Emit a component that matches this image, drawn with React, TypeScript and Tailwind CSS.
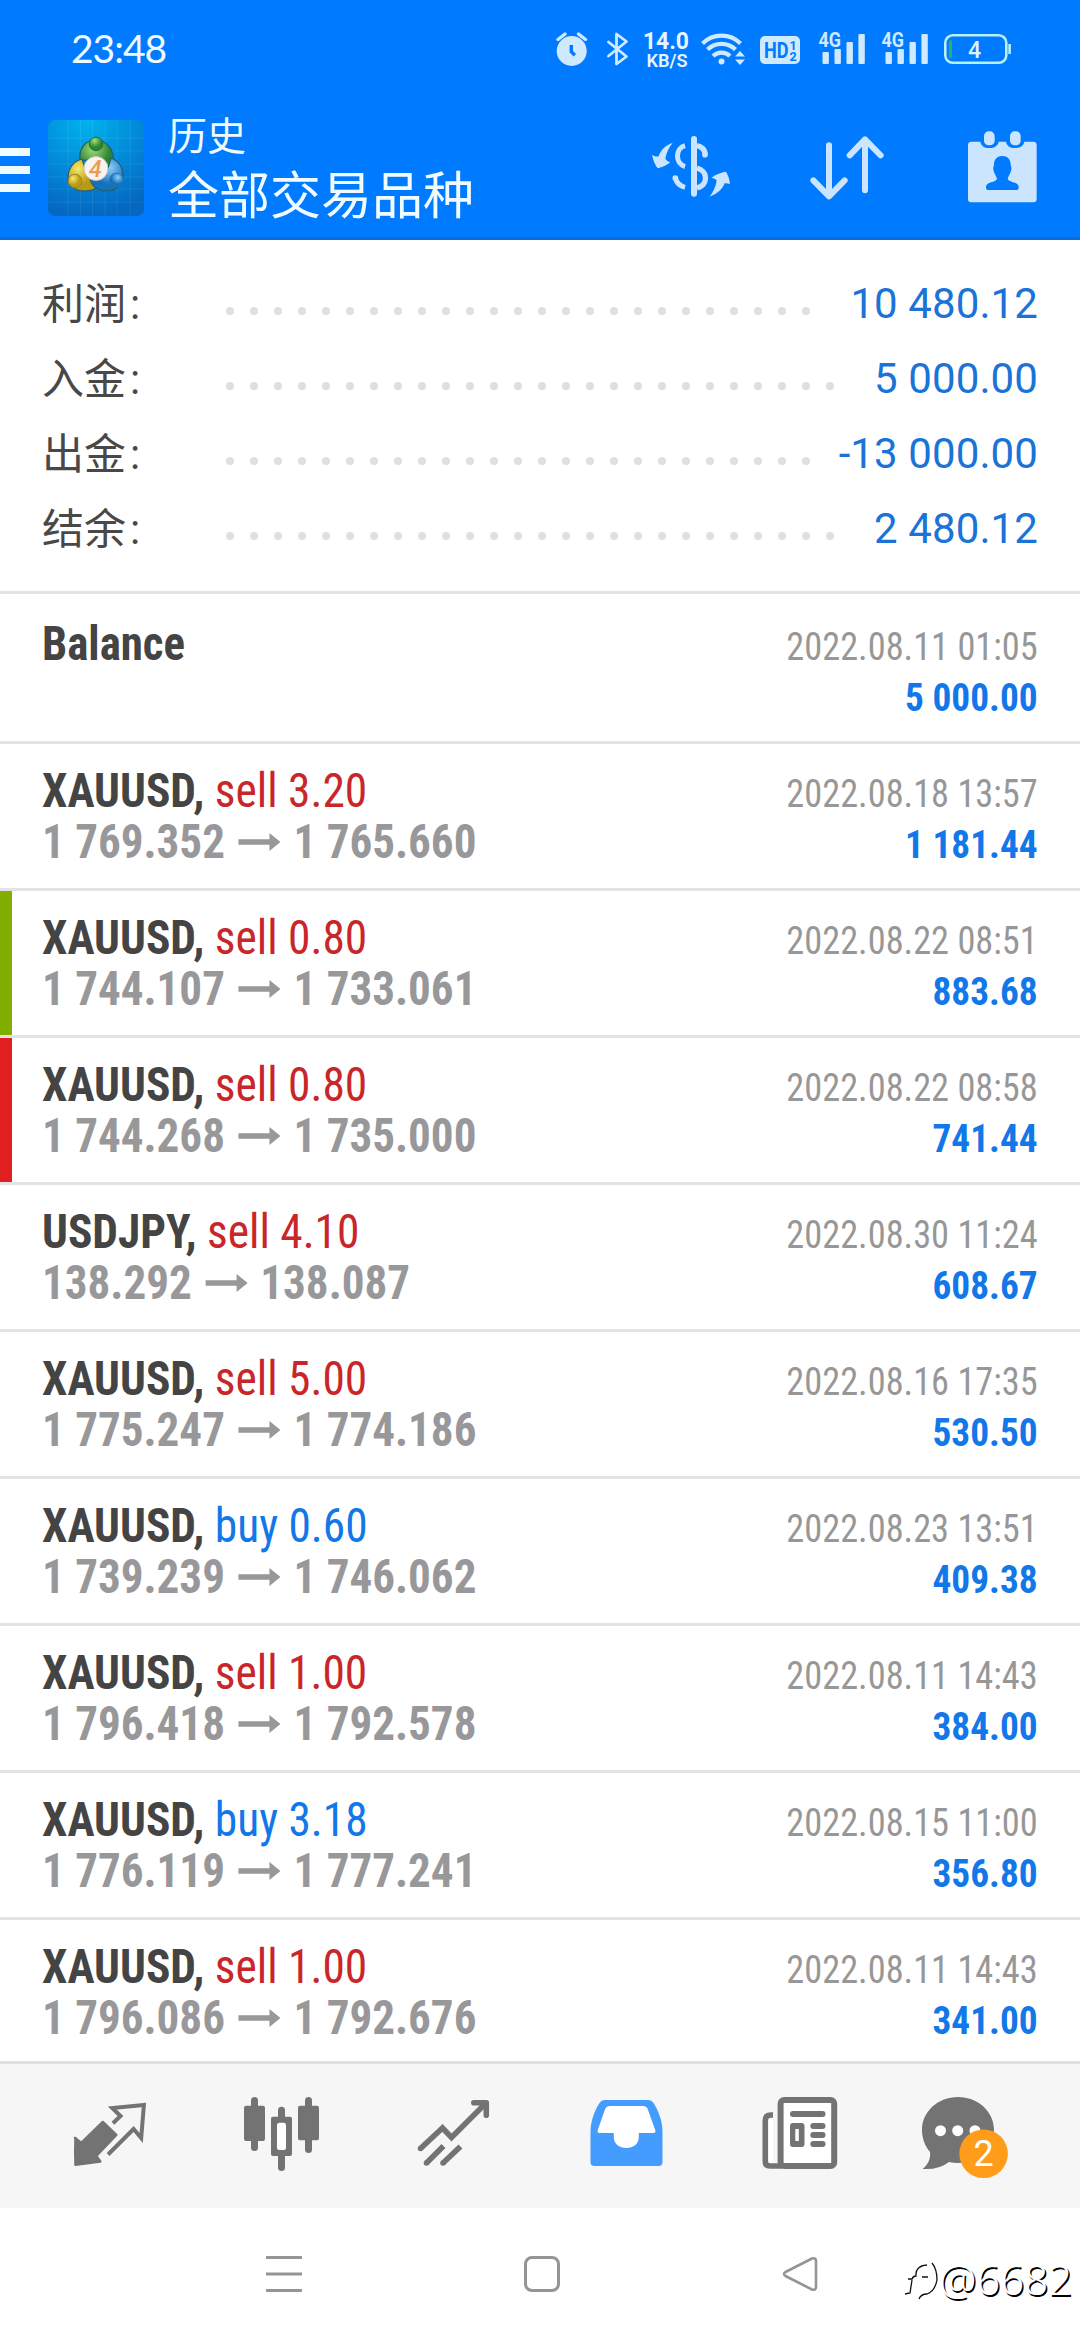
import type { ReactNode } from "react";

const summary = [
  { label: "利润", value: "10 480.12", dots: 25 },
  { label: "入金", value: "5 000.00", dots: 26 },
  { label: "出金", value: "-13 000.00", dots: 25 },
  { label: "结余", value: "2 480.12", dots: 26 },
];

type Deal = {
  symbol: string;
  side: "sell" | "buy";
  volume: string;
  open: string;
  close: string;
  time: string;
  profit: string;
  mark?: "tp" | "sl";
};

const deals: Deal[] = [
  { symbol: "XAUUSD", side: "sell", volume: "3.20", open: "1 769.352", close: "1 765.660", time: "2022.08.18 13:57", profit: "1 181.44" },
  { symbol: "XAUUSD", side: "sell", volume: "0.80", open: "1 744.107", close: "1 733.061", time: "2022.08.22 08:51", profit: "883.68", mark: "tp" },
  { symbol: "XAUUSD", side: "sell", volume: "0.80", open: "1 744.268", close: "1 735.000", time: "2022.08.22 08:58", profit: "741.44", mark: "sl" },
  { symbol: "USDJPY", side: "sell", volume: "4.10", open: "138.292", close: "138.087", time: "2022.08.30 11:24", profit: "608.67" },
  { symbol: "XAUUSD", side: "sell", volume: "5.00", open: "1 775.247", close: "1 774.186", time: "2022.08.16 17:35", profit: "530.50" },
  { symbol: "XAUUSD", side: "buy", volume: "0.60", open: "1 739.239", close: "1 746.062", time: "2022.08.23 13:51", profit: "409.38" },
  { symbol: "XAUUSD", side: "sell", volume: "1.00", open: "1 796.418", close: "1 792.578", time: "2022.08.11 14:43", profit: "384.00" },
  { symbol: "XAUUSD", side: "buy", volume: "3.18", open: "1 776.119", close: "1 777.241", time: "2022.08.15 11:00", profit: "356.80" },
  { symbol: "XAUUSD", side: "sell", volume: "1.00", open: "1 796.086", close: "1 792.676", time: "2022.08.11 14:43", profit: "341.00" },
];

function Signal() {
  return (
    <svg className="w-[48px] h-[40px]" viewBox="818 28 48 40" fill="#cfe9ff">
      <text x="818.5" y="46" fontSize="21" fontWeight="700" textLength="22.5" lengthAdjust="spacingAndGlyphs">
        4G
      </text>
      <rect x="822.5" y="51" width="6.4" height="12" rx="1" />
      <rect x="834.5" y="48" width="6.4" height="15" rx="1" />
      <rect x="846.5" y="41" width="6.4" height="22" rx="1" />
      <rect x="858.4" y="33" width="6.4" height="30" rx="1" />
    </svg>
  );
}

function StatusBar() {
  return (
    <div className="flex h-[97px] items-center pl-[71px] pr-[68px]">
      <span className="flex-1 font-['Lato'] text-[39px] leading-none tracking-[-1px] text-[#f0fbff]">23:48</span>
      <div className="flex items-center font-['Roboto']">
        {/* alarm */}
        <svg className="w-[32px] h-[40px]" viewBox="557 28 32 40" fill="#cfe9ff">
          <circle cx="572.7" cy="50" r="15" />
          <path d="M559 38.5l7-5.5M586.5 38.5l-7-5.5" stroke="#cfe9ff" strokeWidth="3.4" strokeLinecap="round" />
          <path d="M572.3 44v6.8l3.6 3.5" fill="none" stroke="#007aff" strokeWidth="3.4" />
        </svg>
        <svg className="ml-[18px] w-[24px] h-[40px]" viewBox="606 28 24 40" fill="none" stroke="#cfe9ff" strokeWidth="2.8" strokeLinejoin="round" strokeLinecap="round">
          <path d="M608.5 41l18 14.5-10 7.5V33l10 7.5-18 14.5" />
        </svg>
        <svg className="ml-[12px] w-[48px] h-[48px]" viewBox="642 24 48 48" fill="#e6f6ff">
          <text x="643" y="48" fontSize="24" fontWeight="700" textLength="46" lengthAdjust="spacingAndGlyphs">
            14.0
          </text>
          <text x="646.5" y="65.5" fontSize="19" fontWeight="600" textLength="41" lengthAdjust="spacingAndGlyphs">
            KB/S
          </text>
        </svg>
        <svg className="ml-[9px] w-[48px] h-[40px]" viewBox="699 28 48 40" fill="none" stroke="#cfe9ff" strokeWidth="4.2">
          <path d="M702.5 42.5a27 27 0 0 1 38 0M707.5 48.5a20 20 0 0 1 28 0M713 55a12.5 12.5 0 0 1 17 0" />
          <circle cx="721.5" cy="60.5" r="3" fill="#cfe9ff" stroke="none" />
          <path d="M740 50l5 5.5h-10zM740 64l5-5.5h-10z" fill="#cfe9ff" stroke="none" />
        </svg>
        <svg className="ml-[13px] w-[40px] h-[40px]" viewBox="760 28 40 40" fill="#007aff">
          <rect x="760" y="35" width="40" height="28" rx="5" fill="#cfe9ff" />
          <text x="764" y="56.5" fontSize="21.5" fontWeight="700" textLength="24.5" lengthAdjust="spacingAndGlyphs">
            HD
          </text>
          <text x="789.5" y="48.5" fontSize="12.5" fontWeight="700">1</text>
          <text x="789.5" y="59.5" fontSize="12.5" fontWeight="700">2</text>
        </svg>
        <div className="ml-[18px] flex gap-[15px]">
          <Signal />
          <Signal />
        </div>
        <svg className="ml-[14px] w-[69px] h-[40px]" viewBox="943 28 69 40" fill="none">
          <rect x="945.3" y="34.3" width="61" height="27.5" rx="7.5" stroke="#b5f0f5" strokeWidth="2.6" />
          <path d="M1009.6 43v10" stroke="#b5f0f5" strokeWidth="2.6" />
          <rect x="949" y="39" width="3" height="18" rx="1.5" fill="#27b06e" />
          <text x="968" y="57" fontSize="23" fontWeight="500" fill="#d9f3ff">4</text>
        </svg>
      </div>
    </div>
  );
}

function AppLogo() {
  return (
    <svg className="w-24 h-24" viewBox="0 0 96 96">
      <defs>
        <radialGradient id="sky" cx="0.4" cy="0" r="1">
          <stop offset="0" stopColor="#00b4ee" />
          <stop offset="0.55" stopColor="#0289d8" />
          <stop offset="1" stopColor="#0467c0" />
        </radialGradient>
        <radialGradient id="green" cx="0.4" cy="0.25">
          <stop offset="0" stopColor="#a3dd7a" />
          <stop offset="1" stopColor="#2b8532" />
        </radialGradient>
        <radialGradient id="yellow" cx="0.35" cy="0.3">
          <stop offset="0" stopColor="#f7ea6c" />
          <stop offset="1" stopColor="#b99a16" />
        </radialGradient>
        <radialGradient id="blue" cx="0.6" cy="0.3">
          <stop offset="0" stopColor="#8bd0fa" />
          <stop offset="1" stopColor="#1671bd" />
        </radialGradient>
      </defs>
      <rect width="96" height="96" rx="7" fill="url(#sky)" />
      <path d="M20 0v96M32.5 0v96M44.5 0v96M57 0v96M69 0v96M82 0v96M0 18h96M0 31h96M0 44h96M0 57h96M0 69h96M0 82h96" stroke="#fff" strokeOpacity="0.08" />
      <g stroke="#22606e" strokeWidth="1.2">
        <path d="M32 41c-2-14 7-21 16-21s19 8 17 23c-1 7-5 11-9 12l-6-17z" fill="url(#green)" />
        <path d="M34 39c-8 2-14 9-14 19 0 9 8 13 17 13 6 0 11-2 12-5L38 51z" fill="url(#yellow)" />
        <path d="M63 38c8 3 12 10 12 18 0 10-8 15-17 15-8 0-15-5-16-13l16-3z" fill="url(#blue)" />
      </g>
      <circle cx="48" cy="24" r="6.8" fill="url(#green)" stroke="#27702e" />
      <circle cx="27" cy="61" r="6.8" fill="url(#yellow)" stroke="#99842a" />
      <circle cx="68.5" cy="60" r="6.8" fill="url(#blue)" stroke="#2872ae" />
      <circle cx="48" cy="48.5" r="12" fill="#f7f4f2" stroke="#c9c3b8" />
      <text x="41" y="56.5" fontSize="23" fontStyle="italic" fontWeight="500" fontFamily="Roboto" fill="#f09a4e">4</text>
    </svg>
  );
}

function Header() {
  return (
    <header className="h-[240px] border-b-[3px] border-[#0a6cd6] bg-[#007aff] text-[#f0fbff]">
      <StatusBar />
      <div className="flex pt-[23px]">
        <div className="mt-7 flex w-[30px] flex-col gap-[10px]">
          <div className="h-2 bg-[#f0fbff]" />
          <div className="h-2 bg-[#f0fbff]" />
          <div className="h-2 bg-[#f0fbff]" />
        </div>
        <div className="ml-[18px]">
          <AppLogo />
        </div>
        <div className="-mt-[13px] ml-6 flex-1 font-['Noto_Sans_CJK_SC',sans-serif]">
          <div className="text-[39px] leading-[52px]">历史</div>
          <div className="text-[51px] leading-[66px]">全部交易品种</div>
        </div>
        {/* currency / sort / period, drawn at 3x */}
        <div className="flex pr-[42px]">
          <svg className="mt-[15px] w-[82px] h-[64px]" viewBox="150 104 246 192" fill="none" stroke="#cce5ff">
            <path d="M279 116v164" strokeWidth="18" strokeLinecap="round" />
            <path d="M252 136c-30 8-30 54 0 63M223 233c4 15 14 24 29 28" strokeWidth="15" />
            <path d="M223 233v1" strokeWidth="17" strokeLinecap="round" />
            <path d="M288 136c14 3 23 11 25 26M288 203c34 10 34 49 0 60" strokeWidth="16" />
            <path d="M312 162v1" strokeWidth="17" strokeLinecap="round" />
            <path d="M215 128c-20 6-35 18-42 40-8 2-14-1-20-5 3 16 9 30 17 41 14-3 27-9 38-18-6-2-12-5-15-11 3-17 10-33 22-47zM325 289c22-7 38-20 46-40 6-1 11 0 16 3-1-16-6-28-12-38-14 2-34 9-44 19 8 0 13 3 16 8-3 18-10 34-22 48z" fill="#cce5ff" stroke="none" />
          </svg>
          <svg className="ml-[76px] mt-[15px] w-[76px] h-[66px]" viewBox="624 104 228 198" fill="none" stroke="#cce5ff" strokeWidth="18" strokeLinecap="round" strokeLinejoin="round">
            <path d="M684 135v152M637 240l47 48 47-48M792 270V118M746 165l46-48 47 48" />
          </svg>
          <svg className="ml-[82px] mt-[10px] w-[71px] h-[74px]" viewBox="1100 90 213 222" fill="#cce5ff">
            <path d="M1113 125h27c2 12 12 19 27 19s26-7 28-19h22c2 12 12 19 27 19s26-7 28-19h27q10 0 10 10v162q0 10-10 10h-186q-10 0-10-10V135q0-10 10-10z" />
            <rect x="1151" y="94" width="32" height="42" rx="14" />
            <rect x="1229" y="94" width="32" height="42" rx="14" />
            <path d="M1206 168c15 0 25 10 25 25 0 5 3 8 2 15-2 13-7 16-11 28 3 12 33 8 33 25v3q0 6-6 6h-86q-6 0-6-6v-3c0-17 30-13 33-25-4-12-9-15-11-28-1-7 2-10 2-15 0-15 10-25 25-25z" fill="#007aff" />
          </svg>
        </div>
      </div>
    </header>
  );
}

function Summary() {
  return (
    <section className="h-[354px] border-b-[3px] border-[#e3e3e4] pt-[26px]">
      {summary.map((row) => (
        <div key={row.label} className="flex h-[75px] items-center px-[42px]">
          <span className="mb-[2px] w-[184px] font-['Noto_Sans_CJK_SC',sans-serif] text-[42px] leading-[73px] text-[#484848]">
            {row.label}
            <span className="ml-[4px] font-['Roboto']">:</span>
          </span>
          <span className="mt-[15px] flex flex-1 gap-4">
            {Array.from({ length: row.dots }, (_, i) => (
              <i key={i} className="size-2 shrink-0 rounded-full bg-[#dfdfdf]" />
            ))}
          </span>
          <span className="font-['Roboto'] text-[42px] leading-[75px] tracking-[0.1px] text-[#1b73d8]">{row.value}</span>
        </div>
      ))}
    </section>
  );
}

function Row({ left, time, profit, mark }: { left: ReactNode; time: string; profit: string; mark?: "tp" | "sl" }) {
  return (
    <div className="relative flex h-[147px] shrink-0 justify-between border-b-[3px] border-[#e3e3e4] px-[42px] pt-[21px] font-['Roboto'] font-stretch-condensed">
      {mark && <div className={mark === "tp" ? "absolute inset-y-0 left-0 w-3 bg-[#81ae00]" : "absolute inset-y-0 left-0 w-3 bg-[#e11f1f]"} />}
      <div className="text-[48px] leading-[51px]">{left}</div>
      <div className="pt-[4px] text-right text-[39px] leading-[51px]">
        <div className="origin-right scale-x-[0.932] text-[#979797]">{time}</div>
        <div className="origin-right scale-x-[0.957] font-bold text-[#1277e8]">{profit}</div>
      </div>
    </div>
  );
}

function DealRow({ deal }: { deal: Deal }) {
  const left = (
    <>
      <div className="origin-left scale-x-[0.945] whitespace-pre">
        <span className="font-bold text-[#444]">{deal.symbol}, </span>
        <span className={deal.side === "sell" ? "text-[#c9262a]" : "text-[#1277e8]"}>
          {deal.side} {deal.volume}
        </span>
      </div>
      <div className="flex origin-left scale-x-[0.939] items-center font-bold text-[#98989b]">
        {deal.open}
        <svg className="mx-[14px] h-[18px] w-[45px]" viewBox="0 0 42 18" preserveAspectRatio="none" fill="currentColor">
          <path d="M0 6.2h31V0l11 9-11 9v-6.2H0z" />
        </svg>
        {deal.close}
      </div>
    </>
  );
  return <Row left={left} time={deal.time} profit={deal.profit} mark={deal.mark} />;
}

const tabs = [
  <svg key="quotes" className="w-24 h-[84px]" viewBox="62 54 96 84" fill="none">
    <path d="M75 98l6.3 5 21.5-21 13.5 13-20 21 4 5.5-24.8 3.3q-.5-13 0-26.8z" fill="#737373" stroke="#737373" strokeWidth="2.5" strokeLinejoin="round" />
    <path d="M112.9 83.3l7.6-7.3-8.2-8 31.6-3-2.7 33-7.6-9-25.5 25.5" stroke="#737373" strokeWidth="4" />
  </svg>,
  <svg key="chart" className="w-24 h-[84px]" viewBox="234 54 96 84" fill="#737373">
    <rect x="251" y="57" width="7" height="54" rx="3.5" />
    <rect x="244" y="65.7" width="21" height="35.3" rx="2" />
    <rect x="278" y="66.7" width="7" height="64.3" rx="3.5" />
    <rect x="271" y="76.7" width="21" height="39.3" rx="2" />
    <rect x="277" y="82.7" width="9" height="27.3" rx="2.5" fill="#fff" />
    <rect x="305" y="57" width="7" height="56" rx="3.5" />
    <rect x="298" y="65.7" width="21" height="34.6" rx="2" />
  </svg>,
  <svg key="trade" className="w-24 h-[84px]" viewBox="406 54 96 84" fill="none" stroke="#737373" strokeWidth="5.6">
    <path d="M420.5 108.5l22-20.5 9 9.5 34-34" />
    <path d="M473.8 62.8h12.5v12.5" strokeLinecap="round" strokeLinejoin="round" />
    <path d="M426.5 123l17-17M443 123l17.5-16.5" />
    <path d="M420.5 108.5h0M426.5 123h0M443 123h0" strokeLinecap="round" />
  </svg>,
  <svg key="history" className="w-24 h-[84px]" viewBox="578 54 96 84" fill="#459cff">
    <path d="M604.5 60h44q3 0 5 3c5 8 9 18 9 29v30q0 4-4 4h-64q-4 0-4-4V92c0-11 4-21 9-29q2-3 5-3z" />
    <path d="M609.5 66h33.5q3.5 0 4.5 2.5l7.7 21.5q1 3-2 3h-14.4v4c0 7-5.5 11-12.5 11s-12.5-4-12.5-11v-4h-14q-3 0-2-3l7.5-21.5q1-2.5 4.2-2.5z" fill="#fff" />
  </svg>,
  <svg key="news" className="w-24 h-[84px]" viewBox="750 54 96 84" fill="#737373">
    <path d="M780 126h-12q-3 0-3-3V78q0-3 3-3h5v51z" fill="#fff" />
    <path d="M773 75h-2q-5.7 0-5.7 5.5v41q0 4.5 4.7 4.5h12" fill="none" stroke="#737373" strokeWidth="5.6" />
    <rect x="780.6" y="60" width="53.6" height="66" rx="3.5" fill="#fff" stroke="#737373" strokeWidth="6" />
    <rect x="790" y="71" width="35.5" height="6" rx="3" />
    <path d="M793 83h8.5q3 0 3 3v18q0 3-3 3H793q-3 0-3-3V86q0-3 3-3z" />
    <rect x="795.3" y="89" width="3.5" height="12" fill="#fff" />
    <rect x="810.3" y="83" width="15.2" height="6" rx="3" />
    <rect x="810.3" y="92" width="15.2" height="6" rx="3" />
    <rect x="810.3" y="101" width="15.2" height="6" rx="3" />
  </svg>,
  <svg key="chat" className="w-24 h-[84px]" viewBox="922 54 96 84">
    <path d="M958 57c20 0 36 14.5 36 33s-16 33-36 33q-5 0-9-1-10 8-26.5 7c5-4 8.5-9.5 7.5-17-5-6-8-13.5-8-22 0-18.5 16-33 36-33z" fill="#737373" />
    <g fill="#fff">
      <circle cx="940.5" cy="90.7" r="5.5" />
      <circle cx="957.7" cy="90.7" r="5.5" />
      <circle cx="975" cy="90.7" r="5.5" />
    </g>
    <circle cx="983.6" cy="113.7" r="24.3" fill="#ff9c1a" />
    <text x="983.6" y="126" textAnchor="middle" fontSize="36" fontFamily="Roboto" fill="#fff">2</text>
  </svg>,
];

function TabBar() {
  return (
    <nav className="flex h-[147px] border-t-[3px] border-[#e1e1e1] bg-[#f6f6f6] px-6">
      {tabs.map((icon, i) => (
        <button key={i} className="flex flex-1 items-center justify-center">
          {icon}
        </button>
      ))}
    </nav>
  );
}

function SystemNav() {
  return (
    <div className="relative flex h-[132px] items-center pl-[265px]">
      <svg className="h-10 w-[38px]" viewBox="0 0 38 40" stroke="#959595" strokeWidth="3">
        <path d="M1 3.5h36M1 20h36M1 36.5h36" />
      </svg>
      <div className="ml-[221px] size-9 rounded-lg border-[3px] border-[#959595]" />
      <svg className="ml-[221px] h-10 w-[38px]" viewBox="0 0 38 40" fill="none" stroke="#959595" strokeWidth="2.6" strokeLinejoin="round">
        <path d="M31 4.5L4.5 18q-3 2 0 4L31 35.5q4 1 4-2.5V7q0-3.5-4-2.5z" />
      </svg>
      <div className="absolute left-[903px] top-[46px] flex items-center font-['Noto_Sans'] text-[42px] font-light leading-[50px] text-white [text-shadow:1.5px_1.5px_0.5px_#000]">
        <svg className="h-[46px] w-[36px]" viewBox="0 0 36 46" fill="none" stroke="#111" strokeWidth="1.3">
          <path d="M2 38l5-1 2-13M5 23h4q1-3 4-3-1-10 11-11M19 21h6M29 7q5 6 5 17-2 11-10 14-6 0-8 5" />
        </svg>
        @6682
      </div>
    </div>
  );
}

export default function App() {
  return (
    <div className="flex h-[2340px] w-[1080px] flex-col overflow-hidden bg-white">
      <Header />
      <Summary />
      <main className="flex flex-1 flex-col overflow-hidden pt-[3px]">
        <Row left={<div className="origin-left scale-x-[0.935] font-bold text-[#444]">Balance</div>} time="2022.08.11 01:05" profit="5 000.00" />
        {deals.map((deal, i) => (
          <DealRow key={i} deal={deal} />
        ))}
      </main>
      <TabBar />
      <SystemNav />
    </div>
  );
}
